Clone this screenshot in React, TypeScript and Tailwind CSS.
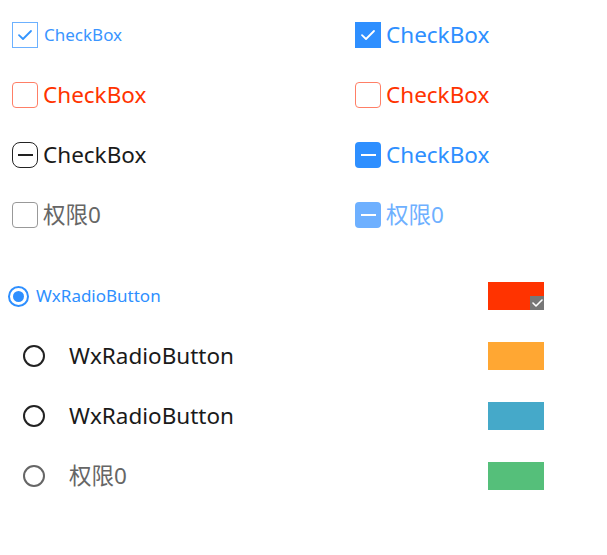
import React from "react";

const font = { fontFamily: '"Noto Sans", "Noto Sans CJK SC", sans-serif' };

function Check({ color }: { color: string }) {
  return (
    <svg width="16" height="12" viewBox="0 0 16 12" fill="none">
      <path d="M2 6.2 L6 10 L14 2" stroke={color} strokeWidth="1.8" strokeLinecap="round" strokeLinejoin="round" />
    </svg>
  );
}

export default function App() {
  return (
    <div className="w-[607px] h-[555px] bg-white text-[#1a1a1a]" style={font}>
      <div className="grid grid-cols-[343px_1fr] pl-[12px] pt-[5px]">
        {/* Row 1 */}
        <div className="h-[60px] flex items-center gap-[6px]">
          <div className="w-[26px] h-[26px] border border-[#6cb1ff] flex items-center justify-center">
            <Check color="#3395ff" />
          </div>
          <span className="text-[17px] text-[#3a95ff]">CheckBox</span>
        </div>
        <div className="h-[60px] flex items-center gap-[5px]">
          <div className="w-[26px] h-[26px] bg-[#2e8fff] flex items-center justify-center">
            <Check color="#ffffff" />
          </div>
          <span className="text-[22.5px] text-[#2e8fff]">CheckBox</span>
        </div>
        {/* Row 2 */}
        <div className="h-[60px] flex items-center gap-[5px]">
          <div className="w-[26px] h-[26px] border border-[#ff7f66] rounded-[4px]" />
          <span className="text-[22.5px] text-[#ff3300]">CheckBox</span>
        </div>
        <div className="h-[60px] flex items-center gap-[5px]">
          <div className="w-[26px] h-[26px] border border-[#ff7f66] rounded-[4px]" />
          <span className="text-[22.5px] text-[#ff3300]">CheckBox</span>
        </div>
        {/* Row 3 */}
        <div className="h-[60px] flex items-center gap-[5px]">
          <div className="w-[26px] h-[26px] border border-[#222] rounded-[8px] flex items-center justify-center">
            <div className="w-[15px] h-[1.5px] bg-[#222]" />
          </div>
          <span className="text-[22.5px] text-[#1a1a1a]">CheckBox</span>
        </div>
        <div className="h-[60px] flex items-center gap-[5px]">
          <div className="w-[26px] h-[26px] bg-[#2e8fff] rounded-[4px] flex items-center justify-center">
            <div className="w-[15px] h-[2px] bg-white" />
          </div>
          <span className="text-[22.5px] text-[#2e8fff]">CheckBox</span>
        </div>
        {/* Row 4 */}
        <div className="h-[60px] flex items-center gap-[5px]">
          <div className="w-[26px] h-[26px] border border-[#999] rounded-[4px]" />
          <span className="text-[22.5px] text-[#666]">权限0</span>
        </div>
        <div className="h-[60px] flex items-center gap-[5px]">
          <div className="w-[26px] h-[26px] bg-[#6eb0ff] rounded-[4px] flex items-center justify-center">
            <div className="w-[15px] h-[2px] bg-white" />
          </div>
          <span className="text-[22.5px] text-[#6eb0ff]">权限0</span>
        </div>
      </div>

      <div className="flex mt-[21px]">
        <div className="w-[488px] flex flex-col">
          <div className="h-[60px] flex items-center pl-[8px] gap-[7px]">
            <div className="w-[21px] h-[21px] rounded-full border-[2px] border-[#2e8fff] flex items-center justify-center">
              <div className="w-[11px] h-[11px] rounded-full bg-[#2e8fff]" />
            </div>
            <span className="text-[17px] text-[#2e8fff]">WxRadioButton</span>
          </div>
          <div className="h-[60px] flex items-center pl-[23px] gap-[24px]">
            <div className="w-[22px] h-[22px] rounded-full border-[2.5px] border-[#222]" />
            <span className="text-[22.5px] text-[#1a1a1a]">WxRadioButton</span>
          </div>
          <div className="h-[60px] flex items-center pl-[23px] gap-[24px]">
            <div className="w-[22px] h-[22px] rounded-full border-[2.5px] border-[#222]" />
            <span className="text-[22.5px] text-[#1a1a1a]">WxRadioButton</span>
          </div>
          <div className="h-[60px] flex items-center pl-[23px] gap-[24px]">
            <div className="w-[22px] h-[22px] rounded-full border-[2.5px] border-[#666]" />
            <span className="text-[22.5px] text-[#666]">权限0</span>
          </div>
        </div>
        <div className="flex flex-col">
          <div className="h-[60px] flex items-center">
            <div className="relative w-[56px] h-[28px] bg-[#ff3300]">
              <div className="absolute right-0 bottom-0 w-[14px] h-[14px] bg-[#777] flex items-center justify-center">
                <svg width="11" height="8" viewBox="0 0 11 8" fill="none">
                  <path d="M1 4 L4 7 L10 1" stroke="#fff" strokeWidth="1.6" strokeLinecap="round" strokeLinejoin="round" />
                </svg>
              </div>
            </div>
          </div>
          <div className="h-[60px] flex items-center">
            <div className="w-[56px] h-[28px] bg-[#ffa733]" />
          </div>
          <div className="h-[60px] flex items-center">
            <div className="w-[56px] h-[28px] bg-[#45a9c9]" />
          </div>
          <div className="h-[60px] flex items-center">
            <div className="w-[56px] h-[28px] bg-[#55bf7a]" />
          </div>
        </div>
      </div>
    </div>
  );
}
